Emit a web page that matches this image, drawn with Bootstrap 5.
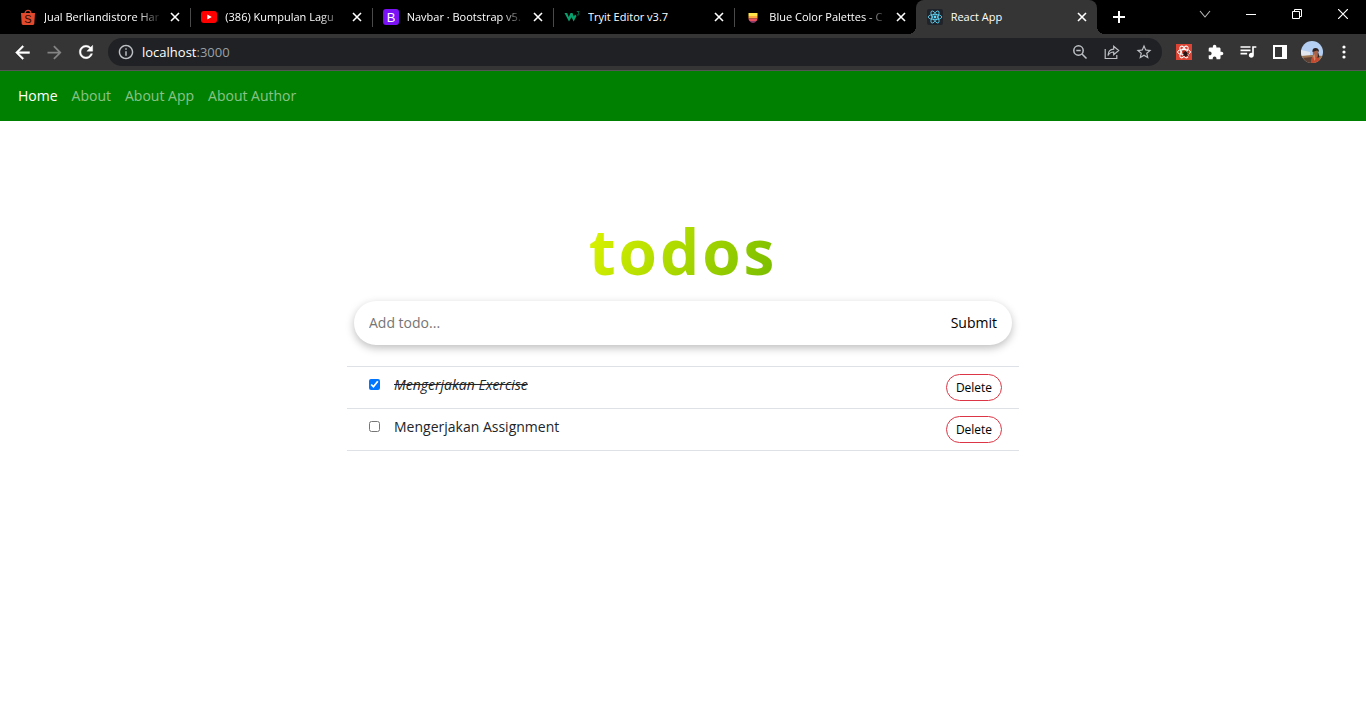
<!DOCTYPE html>
<html lang="id">
<head>
<meta charset="utf-8">
<meta name="viewport" content="width=device-width, initial-scale=1">
<title>React App</title>
<link href="https://cdn.jsdelivr.net/npm/bootstrap@5.3.0/dist/css/bootstrap.min.css" rel="stylesheet">
<style>
  body { font-family: "Open Sans", "Noto Sans", sans-serif; font-size: 14px; line-height: 20px; }
  button { font-family: inherit; }

  /* Browser window */
  .tab-strip { height: 34px; background: #000; padding-left: 9px; }
  .tab-list { flex: 0 1 1088px; min-width: 0; }
  .tab-item { flex: 1 1 0; min-width: 0; padding: 0 10px 0 11px; gap: 8px; font-size: 11px; color: #fff; position: relative; }
  .tab-item + .tab-item:not(.current)::before { content: ""; position: absolute; left: 0; top: 8px; height: 19px; width: 1px; background: #4a4a4a; }
  .tab-item.current { background: #353535; border-radius: 8px 8px 0 0; }
  .tab-item.current::before, .tab-item.current::after { content: ""; position: absolute; bottom: 0; width: 8px; height: 8px; }
  .tab-item.current::before { left: -8px; background: radial-gradient(circle at 0 0, #000 8px, #353535 8px); }
  .tab-item.current::after { right: -8px; background: radial-gradient(circle at 100% 0, #000 8px, #353535 8px); }
  .tab-title { flex: 1 1 0; min-width: 0; overflow: hidden; white-space: nowrap; color: inherit; text-decoration: none; }
  .tab-title.fading { -webkit-mask-image: linear-gradient(to left, transparent, #000 24px); mask-image: linear-gradient(to left, transparent, #000 24px); }
  .plain-btn { display: flex; align-items: center; justify-content: center; flex: none; border: 0; padding: 0; background: none; color: #fff; }
  .tab-close { width: 10px; height: 16px; }
  .tab-new { width: 44px; height: 34px; }
  .win-btn { width: 46px; height: 28px; }
  .toolbar { height: 37px; background: #353535; padding: 4px 6px; gap: 6px; border-bottom: 1px solid #555; }
  .tool-btn { width: 32px; height: 28px; }
  .omnibox { height: 28px; border-radius: 14px; background: #202124; padding: 0 2px 0 10px; color: #fff; min-width: 0; }
  .omnibox .dim { color: #9aa0a6; }
  .address { font-size: 13px; margin-left: 8px; }
  .soft { color: #bdc1c6; }

  /* Todo application */
  .app-nav { background: green; padding: 8px 11px; min-height: 50px; }
  .app-nav .navbar-nav .nav-link { padding: 7px; color: rgba(255, 255, 255, .55); }
  .app-nav .navbar-nav .nav-link.active { color: #fff; font-weight: 500; }
  .todo-app { max-width: 672px; padding-top: 88px; }
  .todo-heading { font-size: 62px; line-height: 84px; font-weight: 700; letter-spacing: 3px; margin: 0 0 8px; }
  .todo-heading span { background: linear-gradient(120deg, #e0f600, #74ba00); -webkit-background-clip: text; background-clip: text; color: transparent; }
  .todo-form { height: 44px; margin: 0 7px 21px; padding: 0 15px; border-radius: 22px; box-shadow: 0 3px 8px rgba(0, 0, 0, .26); }
  .todo-form input { border: 0; outline: 0; background: none; padding: 0; min-width: 0; color: #212529; }
  .todo-form input::placeholder { color: #757575; opacity: 1; }
  .todo-form button { border: 0; background: none; padding: 0; color: #000; }
  .todo-list { border-top: 1px solid #dee2e6; }
  .todo-row { padding: 7px 17px 7px 22px; border-bottom: 1px solid #dee2e6; line-height: 20px; }
  .todo-row input { width: 11px; height: 11px; margin: 0 14px 6px 0; flex: none; }
  .todo-row label { margin-bottom: 5px; }
  .todo-row input:checked + label { font-style: italic; text-decoration: line-through; }
  .delete-btn { width: 56px; height: 27px; border: 1px solid #dc3545; border-radius: 14px; background: #fff; color: #000; font-size: 12px; padding: 0; }
</style>
</head>
<body class="bg-white">

<header>
  <div class="tab-strip d-flex">
    <div class="tab-list d-flex">
      <div class="tab-item d-flex align-items-center">
        <svg width="16" height="16" viewBox="0 0 16 16"><path d="M5 4.500C5 .2 11 .2 11 4.500" fill="none" stroke="#d9492f" stroke-width="1.200"/><path d="M1 4h14l-.7 10.600Q14.200 16 13 16H3Q1.800 16 1.700 14.600z" fill="#e2492d"/><text x="8" y="14" text-anchor="middle" font-family="Liberation Sans" font-size="11" fill="#2a0a04">S</text></svg>
        <a href="#" class="tab-title fading">Jual Berliandistore Har</a>
        <button class="plain-btn tab-close" aria-label="Close tab"><svg width="10" height="10" viewBox="0 0 10 10"><path d="M1 1l8 8M9 1l-8 8" stroke="currentColor" stroke-width="1.600"/></svg></button>
      </div>
      <div class="tab-item d-flex align-items-center">
        <svg width="16" height="16" viewBox="0 0 16 16"><rect y="2" width="16" height="12" rx="3" fill="#f00"/><path d="M6.300 5.400v5.200L10.800 8z" fill="#fff"/></svg>
        <a href="#" class="tab-title fading">(386) Kumpulan Lagu</a>
        <button class="plain-btn tab-close" aria-label="Close tab"><svg width="10" height="10" viewBox="0 0 10 10"><path d="M1 1l8 8M9 1l-8 8" stroke="currentColor" stroke-width="1.600"/></svg></button>
      </div>
      <div class="tab-item d-flex align-items-center">
        <svg width="16" height="16" viewBox="0 0 16 16"><rect width="16" height="16" rx="3" fill="#7a12f5"/><text x="8" y="12.500" text-anchor="middle" font-family="Liberation Sans" font-size="13" fill="#fff">B</text></svg>
        <a href="#" class="tab-title fading">Navbar · Bootstrap v5.</a>
        <button class="plain-btn tab-close" aria-label="Close tab"><svg width="10" height="10" viewBox="0 0 10 10"><path d="M1 1l8 8M9 1l-8 8" stroke="currentColor" stroke-width="1.600"/></svg></button>
      </div>
      <div class="tab-item d-flex align-items-center">
        <svg width="16" height="16" viewBox="0 0 16 16"><path d="M.5 4h2.600l1.700 4 1.700-4h2l1.300 3.500L11 5.500l1.500 1.500-2.800 5.500L7.500 8.300 5 12.500z" fill="#0aa06e"/><path d="M12.800 2.500h2.400l-1.200 1.500q1.600.3 1.100 1.500-.8 1-2.300.3" fill="none" stroke="#08724f" stroke-width=".9"/></svg>
        <a href="#" class="tab-title">Tryit Editor v3.7</a>
        <button class="plain-btn tab-close" aria-label="Close tab"><svg width="10" height="10" viewBox="0 0 10 10"><path d="M1 1l8 8M9 1l-8 8" stroke="currentColor" stroke-width="1.600"/></svg></button>
      </div>
      <div class="tab-item d-flex align-items-center">
        <svg width="16" height="16" viewBox="0 0 16 16"><path d="M3.500 4h9v3h-9z" fill="#ffe54a"/><path d="M3.500 7h9v2.500h-9z" fill="#ffa83e"/><path d="M3.500 9.500h9q-.1 1.600-1 2.500h-7q-.9-.9-1-2.500z" fill="#e8515f"/><path d="M4.500 12h7q-1.400 2-3.500 2t-3.500-2z" fill="#8a3a69"/></svg>
        <a href="#" class="tab-title fading">Blue Color Palettes - C</a>
        <button class="plain-btn tab-close" aria-label="Close tab"><svg width="10" height="10" viewBox="0 0 10 10"><path d="M1 1l8 8M9 1l-8 8" stroke="currentColor" stroke-width="1.600"/></svg></button>
      </div>
      <div class="tab-item current d-flex align-items-center">
        <svg width="16" height="16" viewBox="0 0 16 16"><rect width="16" height="16" rx="2" fill="#20232a"/><g fill="none" stroke="#61dafb" stroke-width=".8"><ellipse cx="8" cy="8" rx="6.800" ry="2.600"/><ellipse cx="8" cy="8" rx="6.800" ry="2.600" transform="rotate(60 8 8)"/><ellipse cx="8" cy="8" rx="6.800" ry="2.600" transform="rotate(120 8 8)"/></g><circle cx="8" cy="8" r="1.400" fill="#61dafb"/></svg>
        <a href="#" class="tab-title">React App</a>
        <button class="plain-btn tab-close" aria-label="Close tab"><svg width="10" height="10" viewBox="0 0 10 10"><path d="M1 1l8 8M9 1l-8 8" stroke="currentColor" stroke-width="1.600"/></svg></button>
      </div>
    </div>
    <button class="plain-btn tab-new" aria-label="New tab"><svg width="12" height="12" viewBox="0 0 12 12"><path d="M6 0v12M0 6h12" stroke="currentColor" stroke-width="2"/></svg></button>
    <div class="d-flex ms-auto">
      <button class="plain-btn win-btn" aria-label="Search tabs"><svg width="12" height="12" viewBox="0 0 12 12"><path d="M1 3l5 6 5-6" fill="none" stroke="#bbb" stroke-width="1.100"/></svg></button>
      <button class="plain-btn win-btn" aria-label="Minimize"><svg width="10" height="10" viewBox="0 0 10 10"><path d="M0 5.500h10" stroke="currentColor"/></svg></button>
      <button class="plain-btn win-btn" aria-label="Restore"><svg width="10" height="10" viewBox="0 0 10 10" fill="none" stroke="currentColor"><path d="M.5 2.500h7v7h-7zM2.500 2.500v-2h7v7h-2"/></svg></button>
      <button class="plain-btn win-btn" aria-label="Close"><svg width="10" height="10" viewBox="0 0 10 10"><path d="M0 0l10 10M10 0L0 10" stroke="currentColor" stroke-width="1.200"/></svg></button>
    </div>
  </div>

  <div class="toolbar d-flex align-items-center">
    <div class="d-flex">
      <button class="plain-btn tool-btn" aria-label="Back"><svg width="21" height="21" viewBox="0 0 24 24" fill="currentColor" stroke="currentColor" stroke-width=".5"><path d="M20 11H7.830l5.590-5.590L12 4l-8 8 8 8 1.410-1.410L7.830 13H20z"/></svg></button>
      <button class="plain-btn tool-btn" aria-label="Forward"><svg width="21" height="21" viewBox="0 0 24 24" fill="#848484"><path d="M4 11h12.170l-5.590-5.590L12 4l8 8-8 8-1.410-1.410L16.170 13H4z"/></svg></button>
      <button class="plain-btn tool-btn" aria-label="Reload"><svg width="20" height="20" viewBox="0 0 24 24" fill="currentColor" stroke="currentColor" stroke-width=".5"><path d="M17.650 6.350C16.200 4.900 14.210 4 12 4c-4.420 0-7.990 3.580-7.990 8s3.570 8 7.990 8c3.730 0 6.840-2.550 7.730-6h-2.080c-.82 2.330-3.040 4-5.650 4-3.310 0-6-2.690-6-6s2.690-6 6-6c1.660 0 3.140.69 4.220 1.780L13 11h7V4z"/></svg></button>
    </div>
    <div class="omnibox d-flex align-items-center flex-grow-1">
      <svg class="soft" width="16" height="16" viewBox="1 1 22 22" fill="currentColor"><path d="M11 7h2v2h-2zm0 4h2v6h-2zm1-9C6.480 2 2 6.480 2 12s4.480 10 10 10 10-4.480 10-10S17.520 2 12 2zm0 18c-4.410 0-8-3.590-8-8s3.590-8 8-8 8 3.590 8 8-3.590 8-8 8z"/></svg>
      <div class="address flex-grow-1" role="textbox" tabindex="0" aria-label="Address">localhost<span class="dim">:3000</span></div>
      <button class="plain-btn tool-btn soft" aria-label="Zoom"><svg width="16" height="16" viewBox="0 0 16 16" fill="none" stroke="currentColor" stroke-width="1.500"><circle cx="6.500" cy="6.500" r="4.700"/><path d="M10 10l4.500 4.500M4.300 6.500h4.400"/></svg></button>
      <button class="plain-btn tool-btn soft" aria-label="Share"><svg width="16" height="16" viewBox="0 0 16 16" fill="none" stroke="currentColor" stroke-width="1.200"><path d="M1.200 5v9.500h11.600V11M4 11.500Q4.200 5.500 9.700 5.200V2.200l5 4.300-5 4.300V8Q6 7.900 4 11.500z"/></svg></button>
      <button class="plain-btn tool-btn soft" aria-label="Bookmark"><svg width="18" height="18" viewBox="0 0 24 24" fill="currentColor"><path d="M22 9.240l-7.190-.62L12 2 9.190 8.630 2 9.240l5.460 4.730L5.820 21 12 17.270 18.180 21l-1.630-7.030zM12 15.400l-3.760 2.270 1-4.280-3.320-2.880 4.380-.38L12 6.100l1.710 4.040 4.380.38-3.320 2.880 1 4.280z"/></svg></button>
    </div>
    <div class="d-flex">
      <button class="plain-btn tool-btn" aria-label="React Developer Tools"><svg width="16" height="16" viewBox="0 0 16 16"><rect width="16" height="16" fill="#dd4433"/><g fill="none" stroke="#fff"><ellipse cx="8" cy="8" rx="6.500" ry="2.600"/><ellipse cx="8" cy="8" rx="6.500" ry="2.600" transform="rotate(60 8 8)"/><ellipse cx="8" cy="8" rx="6.500" ry="2.600" transform="rotate(120 8 8)"/></g><g stroke="#2b1414" fill="#2b1414"><ellipse cx="9.500" cy="9.800" rx="1.600" ry="2.400"/><path d="M6.500 7l6 5.500M12.500 7L7 12M6.500 9.800h6.500" stroke-width=".8"/></g></svg></button>
      <button class="plain-btn tool-btn" aria-label="Extensions"><svg width="16" height="16" viewBox="1 0 23 23" fill="currentColor"><path d="M20.500 11H19V7c0-1.100-.9-2-2-2h-4V3.500C13 2.120 11.880 1 10.500 1S8 2.120 8 3.500V5H4c-1.100 0-1.990.9-1.990 2v3.800H3.500c1.490 0 2.700 1.210 2.700 2.700s-1.210 2.700-2.700 2.700H2V20c0 1.100.9 2 2 2h3.800v-1.500c0-1.490 1.210-2.700 2.700-2.700s2.700 1.210 2.700 2.700V22H17c1.100 0 2-.9 2-2v-4h1.500c1.380 0 2.500-1.120 2.500-2.500S21.880 11 20.500 11z"/></svg></button>
      <button class="plain-btn tool-btn" aria-label="Media controls"><svg width="20" height="20" viewBox="0 1 24 24" fill="currentColor"><path d="M15 6H3v2h12zm0 4H3v2h12zM3 16h8v-2H3zM17 6v8.180c-.31-.11-.65-.18-1-.18-1.660 0-3 1.340-3 3s1.340 3 3 3 3-1.340 3-3V8h3V6z"/></svg></button>
      <button class="plain-btn tool-btn" aria-label="Side panel"><svg width="14" height="14" viewBox="0 0 14 14"><path d="M0 0h14v14H0zM2 2v10h7V2z" fill="currentColor" fill-rule="evenodd"/></svg></button>
      <button class="plain-btn tool-btn" aria-label="Profile"><svg width="22" height="22" viewBox="0 0 22 22"><clipPath id="face"><circle cx="11" cy="11" r="11"/></clipPath><g clip-path="url(#face)"><path d="M0 0h22v22H0z" fill="#b4cff2"/><path d="M0 9l9 2v5H0z" fill="#e3e8ee"/><path d="M0 15l11-1 11 1v7H0z" fill="#9a7350"/><path d="M2 17l9-1-1 6H6z" fill="#5d4034"/><path d="M10 22q0-6 3-6.500l3 .5q3 1 3 6z" fill="#c4492f"/><ellipse cx="14.500" cy="12" rx="2.700" ry="4" fill="#a8644a"/><path d="M11.500 11q-.5-4 3-4t3.500 4l-2-1.500z" fill="#30211f"/><path d="M17 11l1.500 5-2 1z" fill="#30211f"/><path d="M12 15l1.500-2 1 5-1 2z" fill="#d58a6a"/></g></svg></button>
      <button class="plain-btn tool-btn" aria-label="Menu"><svg width="4" height="14" viewBox="0 0 4 14" fill="currentColor"><circle cx="2" cy="2" r="1.600"/><circle cx="2" cy="7" r="1.600"/><circle cx="2" cy="12" r="1.600"/></svg></button>
    </div>
  </div>
</header>

<nav class="app-nav navbar navbar-expand">
  <ul class="navbar-nav">
    <li class="nav-item"><a class="nav-link active" aria-current="page" href="#">Home</a></li>
    <li class="nav-item"><a class="nav-link" href="#">About</a></li>
    <li class="nav-item"><a class="nav-link" href="#">About App</a></li>
    <li class="nav-item"><a class="nav-link" href="#">About Author</a></li>
  </ul>
</nav>

<main class="todo-app mx-auto">
  <h1 class="todo-heading text-center"><span>todos</span></h1>
  <form class="todo-form d-flex align-items-center">
    <input class="flex-grow-1" type="text" placeholder="Add todo..." aria-label="Add todo">
    <button type="submit">Submit</button>
  </form>
  <ul class="todo-list list-unstyled">
    <li class="todo-row d-flex align-items-center">
      <input type="checkbox" id="todo1" checked>
      <label for="todo1">Mengerjakan Exercise</label>
      <button class="delete-btn ms-auto" type="button">Delete</button>
    </li>
    <li class="todo-row d-flex align-items-center">
      <input type="checkbox" id="todo2">
      <label for="todo2">Mengerjakan Assignment</label>
      <button class="delete-btn ms-auto" type="button">Delete</button>
    </li>
  </ul>
</main>

<script src="https://cdn.jsdelivr.net/npm/bootstrap@5.3.0/dist/js/bootstrap.bundle.min.js"></script>
</body>
</html>
